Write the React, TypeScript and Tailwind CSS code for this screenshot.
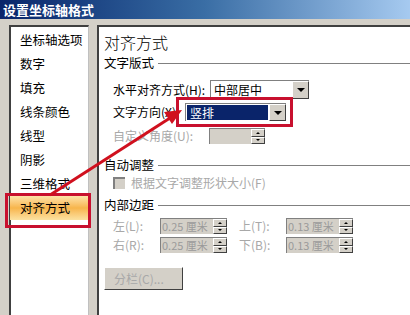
import React from 'react';

const font = { fontFamily: '"SimSun", "Noto Sans CJK SC", sans-serif' };

const navItems = ['坐标轴选项', '数字', '填充', '线条颜色', '线型', '阴影', '三维格式', '对齐方式'];

// little black down-triangle used by combo buttons
const ComboArrow = () => (
  <div className="w-[17px] h-full bg-[#d4d0c8] border border-t-white border-l-white border-r-[#404040] border-b-[#404040] flex items-center justify-center">
    <div className="w-0 h-0 border-l-[4px] border-r-[4px] border-t-[4px] border-l-transparent border-r-transparent border-t-black" />
  </div>
);

const Spin = () => (
  <div className="w-[14px] h-full flex flex-col">
    <div className="flex-1 bg-[#d4d0c8] border border-t-white border-l-white border-r-[#404040] border-b-[#404040] flex items-center justify-center">
      <div className="w-0 h-0 border-l-[2px] border-r-[2px] border-b-[2px] border-l-transparent border-r-transparent border-b-black" />
    </div>
    <div className="flex-1 bg-[#d4d0c8] border border-t-white border-l-white border-r-[#404040] border-b-[#404040] flex items-center justify-center">
      <div className="w-0 h-0 border-l-[2px] border-r-[2px] border-t-[2px] border-l-transparent border-r-transparent border-t-black" />
    </div>
  </div>
);

const SpinBox = ({ value }: { value: string }) => (
  <div className="w-[67px] h-[16px] bg-[#d4d0c8] border-t border-l border-[#808080] flex">
    <div className="flex-1 text-[11px] leading-[14px] pl-[1px] text-[#9a9a9a] overflow-hidden whitespace-nowrap">{value}</div>
    <Spin />
  </div>
);

const Section = ({ title }: { title: string }) => (
  <div className="flex items-center h-[16px]">
    <span className="text-[12.5px] leading-[16px] text-black pr-1">{title}</span>
    <div className="flex-1 h-[1px] bg-[#808080]" />
  </div>
);

export default function App() {
  return (
    <div className="relative w-[410px] h-[315px] bg-[#d4d0c8] overflow-hidden flex flex-col" style={font}>
      {/* title bar */}
      <div className="h-[19px] bg-gradient-to-r from-[#0a246a] via-[#3a6ea5] to-[#a6caf0] flex items-center pl-[3px]">
        <span className="text-white text-[13px] leading-[19px] font-bold">设置坐标轴格式</span>
      </div>
      <div className="h-[6px]" />

      <div className="flex flex-1">
        {/* left list */}
        <div className="ml-[9px] w-[80px] bg-white border-l-2 border-t-2 border-[#404040] border-r border-r-[#c0c0c0] flex flex-col pt-[1px]">
          {navItems.map((item, i) => (
            <div
              key={item}
              className={`h-[24px] leading-[24px] flex items-center pl-[9px] text-[12.5px] text-black ${
                i === navItems.length - 1 ? 'mx-[-1px] pl-[10px] bg-gradient-to-b from-[#fde3a7] via-[#f7b54a] to-[#fce2a0]' : ''
              }`}
            >
              {item}
            </div>
          ))}
        </div>

        {/* right panel */}
        <div className="ml-[8px] flex-1 bg-white border-l-2 border-t-2 border-[#404040] pl-[5px] flex flex-col">
          <div className="text-[16px] leading-[20px] h-[20px] mt-[5px] text-black font-light">对齐方式</div>
          <div className="mt-[3px]">
            <Section title="文字版式" />
          </div>

          <div className="pl-[9px] flex flex-col">
            <div className="flex items-center h-[19px] mt-[9px]">
              <span className="text-[12px] leading-[19px] w-[97px] whitespace-nowrap">水平对齐方式(H):</span>
              <div className="w-[99px] h-[19px] bg-white border-t border-l border-[#808080] flex">
                <div className="flex-1 text-[12px] leading-[17px] pl-[3px]">中部居中</div>
                <ComboArrow />
              </div>
            </div>

            <div className="flex items-center h-[18px] mt-[4px]">
              <span className="text-[12px] leading-[18px] w-[72px] whitespace-nowrap">文字方向(X):</span>
              <div className="w-[101px] h-[18px] bg-white border-t border-l border-[#808080] flex">
                <div className="flex-1 bg-[#0a246a] text-white text-[12px] leading-[16px] pl-[3px] m-[1px]">竖排</div>
                <ComboArrow />
              </div>
            </div>

            <div className="flex items-center h-[16px] mt-[7px]">
              <span className="text-[12px] leading-[16px] w-[96px] whitespace-nowrap text-[#a8a8a8]">自定义角度(U):</span>
              <div className="w-[56px] h-[16px] bg-[#d4d0c8] border-t border-l border-[#808080] flex justify-end">
                <Spin />
              </div>
            </div>
          </div>

          <div className="mt-[13px]">
            <Section title="自动调整" />
          </div>
          <div className="flex items-center pl-[9px] mt-[2px] h-[16px]">
            <div className="w-[12px] h-[12px] bg-[#d4d0c8] border-t-2 border-l-2 border-[#808080] mr-[6px]" />
            <span className="text-[12px] leading-[16px] text-[#a8a8a8]">根据文字调整形状大小(F)</span>
          </div>

          <div className="mt-[6px]">
            <Section title="内部边距" />
          </div>

          <div className="grid grid-cols-[47px_79px_47px_67px] auto-rows-[16px] items-center pl-[9px] mt-[5px] gap-y-[3px] text-[12px] leading-[16px] text-[#a8a8a8]">
            <span>左(L):</span>
            <SpinBox value="0.25 厘米" />
            <span>上(T):</span>
            <SpinBox value="0.13 厘米" />
            <span>右(R):</span>
            <SpinBox value="0.25 厘米" />
            <span>下(B):</span>
            <SpinBox value="0.13 厘米" />
          </div>

          <div className="mt-[14px] w-[79px] h-[23px] bg-[#d4d0c8] border border-t-white border-l-white border-r-[#404040] border-b-[#404040] flex items-center pl-[9px] text-[12px] leading-[16px] text-[#a8a8a8]">
            分栏(C)...
          </div>
        </div>
      </div>

      {/* red callouts */}
      <div className="absolute left-[5px] top-[193px] w-[86px] h-[35px] border-[3px] border-[#c8102e]" />
      <div className="absolute left-[176px] top-[97px] w-[117px] h-[30px] border-[3px] border-[#c8102e]" />
      <svg className="absolute left-0 top-0" width="410" height="315">
        <line x1="50" y1="195" x2="170" y2="118" stroke="#d0101e" strokeWidth="3" />
        <polygon points="182,110 164,112 172,124" fill="#d0101e" />
      </svg>
    </div>
  );
}
